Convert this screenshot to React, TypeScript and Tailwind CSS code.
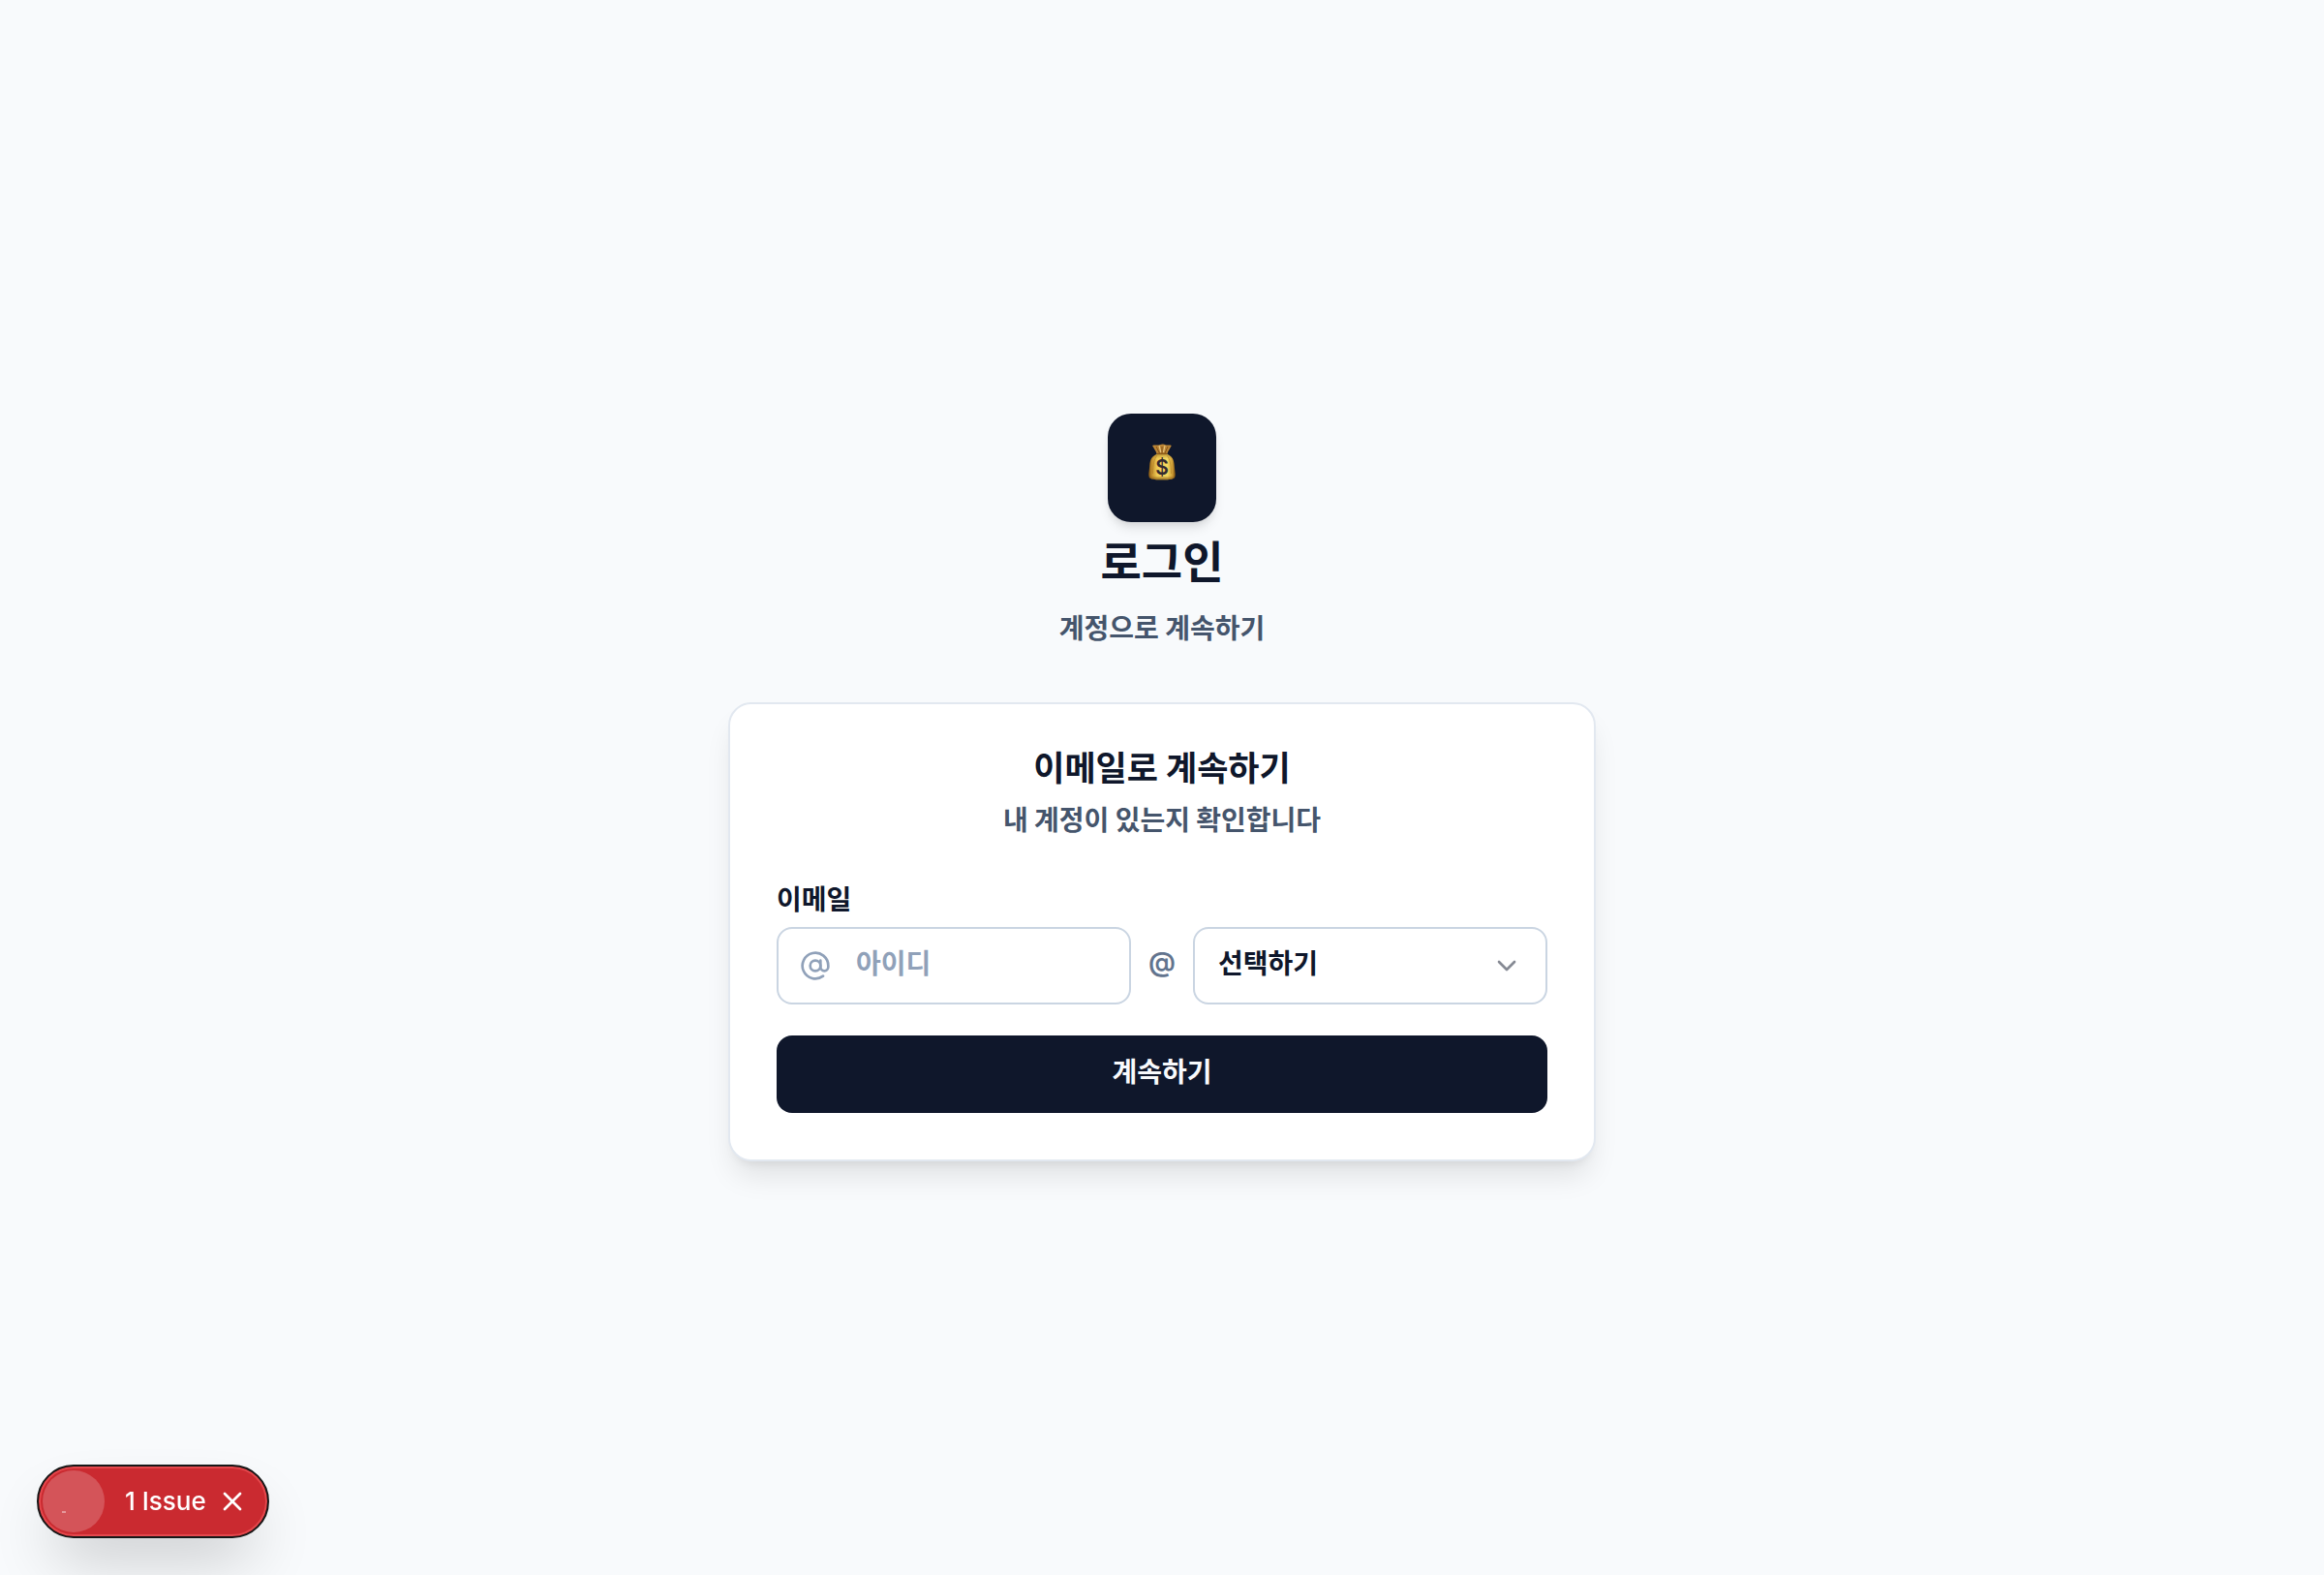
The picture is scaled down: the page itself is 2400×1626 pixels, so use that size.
import React from "react";
import { AtSign, ChevronDown, X } from "lucide-react";

function MoneyBag() {
  return (
    <svg viewBox="0 0 28 38" className="h-[38px] w-7" role="img" aria-label="Money bag">
      <defs>
        <linearGradient id="bag" x1="0" x2="1" y1="0" y2="0">
          <stop offset="0" stopColor="#8a5a12" />
          <stop offset="0.14" stopColor="#c79532" />
          <stop offset="0.32" stopColor="#f0cd55" />
          <stop offset="0.7" stopColor="#f6d960" />
          <stop offset="0.88" stopColor="#cf9f38" />
          <stop offset="1" stopColor="#84550f" />
        </linearGradient>
        <linearGradient id="base" x1="0" x2="0" y1="0" y2="1">
          <stop offset="0" stopColor="#7a4a0c" stopOpacity="0.45" />
          <stop offset="0.2" stopColor="#7a4a0c" stopOpacity="0" />
          <stop offset="0.85" stopColor="#7a4a0c" stopOpacity="0" />
          <stop offset="1" stopColor="#7a4a0c" stopOpacity="0.75" />
        </linearGradient>
      </defs>
      <path d="M4 2C7 .8 9.500 2 11.500 1.200C14 .2 16 .2 17.500 1.200C19.500 2 21.500 .8 23.800 2C22.500 5 20.300 7 19.300 11H8.700C7.700 7 5.500 5 4 2Z" fill="#bb8535" />
      <path d="M8 3L11.500 10M14 3V10M20 3L17 10" stroke="#7d4d15" strokeWidth="0.9" fill="none" />
      <path d="M11 2L12.800 9M17 2L15.500 9" stroke="#ecc981" strokeWidth="1.100" fill="none" />
      <path d="M8.500 11C10.500 9.800 17.500 9.800 19.500 11C24 12.800 26.500 16 26.800 23C27 28 28.500 31.500 27.300 34.500C25.500 37.500 20 37.300 14 37.300C8 37.300 2.500 37.500 .7 34.500C-.4 31.500 1 28 1.200 23C1.500 16 4 12.800 8.500 11Z" fill="url(#bag)" />
      <path d="M8.500 11C10.500 9.800 17.500 9.800 19.500 11C24 12.800 26.500 16 26.800 23C27 28 28.500 31.500 27.300 34.500C25.500 37.500 20 37.300 14 37.300C8 37.300 2.500 37.500 .7 34.500C-.4 31.500 1 28 1.200 23C1.500 16 4 12.800 8.500 11Z" fill="url(#base)" />
      <path d="M9 12C6 16 4.500 21 4.500 31M19 12C22 16 23.500 21 23.500 31" stroke="#a8741f" strokeWidth="0.8" fill="none" opacity="0.6" />
      <path d="M9 10.500H19" stroke="#8a5a18" strokeWidth="1.400" />
      <text x="14" y="32" textAnchor="middle" fontFamily="Inter, sans-serif" fontSize="21" fontWeight="600" fill="#33292f">$</text>
    </svg>
  );
}

function IssueBadge() {
  return (
    <div className="fixed bottom-[38px] left-[38px] flex h-[76px] w-60 items-center rounded-full border-2 border-[#171717] bg-[#ca2a30] pl-1 text-white shadow-[inset_0_0_0_2px_#e5484d,0_32px_64px_-16px_rgba(0,0,0,0.24)]">
      <button type="button" aria-label="Open developer tools" className="flex size-16 shrink-0 items-end rounded-full bg-white/20 pb-5 pl-5">
        <span className="h-0.5 w-1 bg-white/40" />
      </button>
      <button type="button" className="ml-[21px] font-['Inter'] text-[26px] leading-9 font-medium">
        1 Issue
      </button>
      <button type="button" aria-label="Close" className="ml-[11px]">
        <X size={32} strokeWidth={2} />
      </button>
    </div>
  );
}

export default function App() {
  return (
    <main className="flex min-h-screen items-center justify-center bg-slate-50 font-['Noto_Sans_CJK_KR',sans-serif] text-[28px] leading-10 font-bold text-slate-900">
      <div className="w-full max-w-[896px]">
        <header className="flex flex-col items-center text-center">
          <div className="flex size-28 items-center justify-center rounded-3xl bg-slate-900 pb-3 shadow-[0_8px_12px_-2px_rgba(0,0,0,0.1),0_4px_8px_-4px_rgba(0,0,0,0.1)]">
            <MoneyBag />
          </div>
          <h1 className="text-[46px] leading-[76px]">로그인</h1>
          <p className="mt-3 text-slate-600">계정으로 계속하기</p>
        </header>

        <section className="mt-[58px] rounded-3xl border-2 border-slate-200 bg-white p-12 shadow-[0_20px_30px_-6px_rgba(0,0,0,0.1),0_8px_12px_-8px_rgba(0,0,0,0.1)]">
          <div className="text-center">
            <h2 className="text-[35px] leading-8">이메일로 계속하기</h2>
            <p className="mt-[18px] text-slate-600">내 계정이 있는지 확인합니다</p>
          </div>

          <form className="mt-[42px]" onSubmit={(e) => e.preventDefault()}>
            <label htmlFor="email-id" className="block">
              이메일
            </label>
            <div className="mt-2.5 flex items-center gap-4">
              <div className="relative min-w-0 flex-1">
                <AtSign size={32} strokeWidth={2} className="absolute top-6 left-6 text-slate-400" />
                <input
                  id="email-id"
                  type="text"
                  placeholder="아이디"
                  className="block h-20 w-full rounded-2xl border-2 border-slate-300 bg-white pr-6 pb-2 pl-20 outline-none placeholder:text-slate-400"
                />
              </div>
              <span className="w-8 pb-2 text-center font-['Inter'] font-semibold text-slate-500">@</span>
              <div className="relative min-w-0 flex-1">
                <select
                  aria-label="이메일 도메인"
                  className="block h-20 w-full appearance-none rounded-2xl border-2 border-slate-300 bg-white pr-16 pb-2 pl-6 outline-none"
                >
                  <option>선택하기</option>
                </select>
                <ChevronDown size={32} strokeWidth={2} className="pointer-events-none absolute top-6 right-[26px] opacity-50" />
              </div>
            </div>
            <button type="submit" className="mt-8 block h-20 w-full rounded-2xl bg-slate-900 pb-2 text-slate-50">
              계속하기
            </button>
          </form>
        </section>
      </div>
      <IssueBadge />
    </main>
  );
}
